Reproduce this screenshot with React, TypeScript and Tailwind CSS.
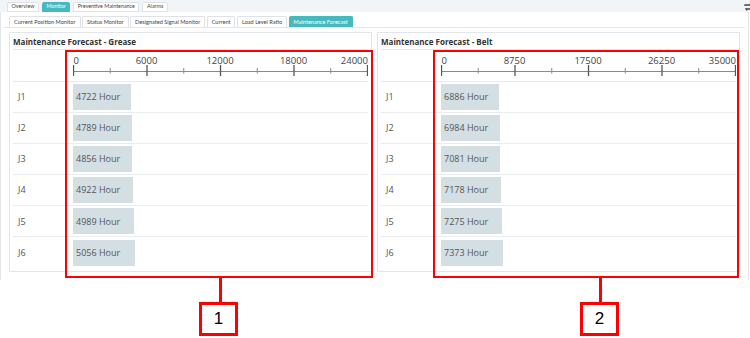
import React from "react";

const topTabs = [
  { label: "Overview", active: false },
  { label: "Monitor", active: true },
  { label: "Preventive Maintenance", active: false },
  { label: "Alarms", active: false },
];

const subTabs = [
  { label: "Current Position Monitor", active: false },
  { label: "Status Monitor", active: false },
  { label: "Designated Signal Monitor", active: false },
  { label: "Current", active: false },
  { label: "Load Level Ratio", active: false },
  { label: "Maintenance Forecast", active: true },
];

type PanelProps = {
  title: string;
  max: number;
  ticks: string[];
  values: number[];
};

const SPAN = 294;

function Axis({ ticks }: { ticks: string[] }) {
  const majors = ticks.map((_, i) => (i * SPAN) / (ticks.length - 1));
  const minors = majors.slice(0, -1).map((m, i) => (m + majors[i + 1]) / 2);
  return (
    <svg width={296} height={30} className="block">
      <line x1={0.5} y1={21.5} x2={SPAN + 0.5} y2={21.5} stroke="#8a8a8a" strokeWidth={1} />
      {majors.map((x, i) => (
        <line key={"M" + i} x1={x + 0.5} y1={15} x2={x + 0.5} y2={26} stroke="#555" strokeWidth={1.3} />
      ))}
      {minors.map((x, i) => (
        <line key={"m" + i} x1={x + 0.5} y1={18} x2={x + 0.5} y2={23.5} stroke="#8a8a8a" strokeWidth={1} />
      ))}
      {ticks.map((t, i) => {
        const x = majors[i];
        const anchor = i === 0 ? "start" : i === ticks.length - 1 ? "end" : "middle";
        const xx = i === 0 ? 0.5 : i === ticks.length - 1 ? x + 1 : x;
        return (
          <text
            key={"t" + i}
            x={xx}
            y={14}
            textAnchor={anchor}
            fontSize={9.5}
            fill="#444"
            fontFamily="'Open Sans', sans-serif"
          >
            {t}
          </text>
        );
      })}
    </svg>
  );
}

function Panel({ title, max, ticks, values }: PanelProps) {
  return (
    <div className="w-[363px] h-[240px] border border-[#e1e6ea] bg-white px-[3px]">
      <div className="h-[16px] pt-[2px] flex items-center text-[8px] font-bold text-[#333] leading-none">{title}</div>
      <div className="border-t border-[#e6eaed]">
        <div className="h-[31.5px] flex border-b border-[#e6eaed]">
          <div className="w-[60px] shrink-0" />
          <Axis ticks={ticks} />
        </div>
        {values.map((v, i) => (
          <div
            key={i}
            className={
              "h-[31.2px] flex items-center " + (i < values.length - 1 ? "border-b border-[#e9edf0]" : "")
            }
          >
            <div className="w-[60px] shrink-0 pl-[5px] text-[9px] text-[#555]">J{i + 1}</div>
            <div
              className="h-[26px] bg-[#d3dfe3] flex items-center pl-[3px] text-[9px] text-[#555] whitespace-nowrap"
              style={{ width: `${(v / max) * SPAN}px` }}
            >
              {v} Hour
            </div>
          </div>
        ))}
      </div>
    </div>
  );
}

export default function App() {
  return (
    <div className="w-[750px] h-[338px] bg-white relative overflow-hidden font-['Open_Sans',sans-serif]">
      {/* top tab bar */}
      <div className="h-[12px] bg-[#f2f5f8] flex items-end pl-[7px] gap-[3px] relative font-['Lato',sans-serif]">
        {topTabs.map((t) => (
          <div
            key={t.label}
            className={
              "h-[10px] px-[3.5px] flex items-center text-[5.4px] leading-none rounded-t-[2px] border " +
              (t.active
                ? "bg-[#45b9be] border-[#45b9be] text-white"
                : "bg-white border-[#dfe3e7] text-[#444]")
            }
          >
            {t.label}
          </div>
        ))}
        <div className="absolute right-[-3px] top-[2px]">
          <svg width={9} height={10} viewBox="0 0 9 10">
            <path d="M1 4 L1 3 L7 3 L6 1.5" fill="none" stroke="#444" strokeWidth={1.3} />
            <path d="M8 6 L8 7 L2 7 L3 8.5" fill="none" stroke="#444" strokeWidth={1.3} />
          </svg>
        </div>
      </div>
      {/* content */}
      <div className="h-[268px] border-l border-r border-[#e3e7ea] w-[749px]">
        <div className="h-[16px] flex items-end pl-[5px] gap-[1.5px] border-b border-[#e3e7ea] mx-[3px] font-['Lato',sans-serif]">
          {subTabs.map((t) => (
            <div
              key={t.label}
              className={
                "h-[11px] px-[4px] flex items-center text-[5.6px] leading-none rounded-t-[2px] border border-b-0 " +
                (t.active
                  ? "bg-[#45b9be] border-[#45b9be] text-white"
                  : "bg-white border-[#dfe3e7] text-[#444]")
              }
            >
              {t.label}
            </div>
          ))}
        </div>
        <div className="flex gap-[5px] pl-[8px] pt-[4px]">
          <Panel
            title="Maintenance Forecast - Grease"
            max={24000}
            ticks={["0", "6000", "12000", "18000", "24000"]}
            values={[4722, 4789, 4856, 4922, 4989, 5056]}
          />
          <Panel
            title="Maintenance Forecast - Belt"
            max={35000}
            ticks={["0", "8750", "17500", "26250", "35000"]}
            values={[6886, 6984, 7081, 7178, 7275, 7373]}
          />
        </div>
      </div>

      {/* annotation overlays */}
      <div className="absolute left-[65px] top-[50px] w-[308px] h-[228px] border-[2.5px] border-[#f00]" />
      <div className="absolute left-[219px] top-[277px] w-[3px] h-[25px] bg-[#f00]" />
      <div className="absolute left-[199px] top-[302px] w-[39px] h-[34px] border-[3px] border-[#f00] bg-white flex items-center justify-center text-[17px] text-black font-['Liberation_Sans',sans-serif]">
        1
      </div>

      <div className="absolute left-[433px] top-[50px] w-[306px] h-[228px] border-[2.5px] border-[#f00]" />
      <div className="absolute left-[599px] top-[277px] w-[3px] h-[25px] bg-[#f00]" />
      <div className="absolute left-[580px] top-[302px] w-[39px] h-[34px] border-[3px] border-[#f00] bg-white flex items-center justify-center text-[17px] text-black font-['Liberation_Sans',sans-serif]">
        2
      </div>
    </div>
  );
}
